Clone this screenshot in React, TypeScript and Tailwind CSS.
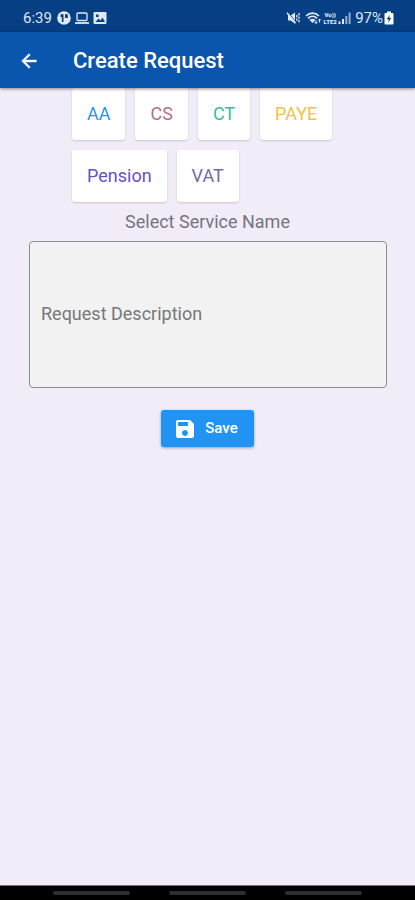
import { useState } from "react";

type Service = { name: string; color: string };

const SERVICES: Service[] = [
  { name: "AA", color: "text-[#2b95e6]" },
  { name: "CS", color: "text-[#b4708f]" },
  { name: "CT", color: "text-[#2fbf9b]" },
  { name: "PAYE", color: "text-[#f2c341]" },
  { name: "Pension", color: "text-[#6a4fc4]" },
  { name: "VAT", color: "text-[#7a68a6]" },
];

export default function App() {
  const [selected, setSelected] = useState<string | null>(null);
  const [description, setDescription] = useState("");

  return (
    <div className="flex min-h-screen flex-col bg-[#f2ecf8] font-[Roboto,sans-serif]">
      <StatusBar />
      <header className="z-10 flex h-14 items-center bg-[#0a55ad] px-[18px] pt-0.5 text-white shadow-[0_1px_3px_rgba(0,0,0,0.45)]">
        <button type="button" aria-label="Back" className="flex w-[55px]">
          <svg viewBox="0 0 24 24" className="size-[22px]" fill="currentColor" stroke="currentColor" strokeWidth="0.6">
            <path d="M20 11H7.83l5.59-5.59L12 4l-8 8 8 8 1.41-1.41L7.83 13H20v-2z" />
          </svg>
        </button>
        <h1 className="text-[22px] leading-7 font-medium">Create Request</h1>
      </header>

      <main className="flex flex-1 flex-col">
        <div className="flex flex-wrap gap-[10px] pr-6 pl-[72px]">
          {SERVICES.map((s) => (
            <button
              key={s.name}
              type="button"
              aria-pressed={selected === s.name}
              onClick={() => setSelected(s.name)}
              className={`h-[52px] rounded-[3px] bg-white px-[15px] text-lg shadow-[0_1px_2px_rgba(0,0,0,0.16)] ${s.color}`}
            >
              {s.name}
            </button>
          ))}
        </div>
        <label htmlFor="description" className="mt-2 text-center text-lg leading-6 text-[#77747c]">
          Select Service Name
        </label>
        <div className="mt-[7px] flex pr-7 pl-[29px]">
          <textarea
            id="description"
            value={description}
            onChange={(e) => setDescription(e.target.value)}
            placeholder="Request Description"
            className="h-[147px] w-full resize-none rounded-[4px] border border-[#8e8c92] bg-[#f2f2f2] px-[11px] pt-[60px] text-lg leading-6 text-[#444444] placeholder:text-[#77767a] focus:outline-none"
          />
        </div>
        <button
          type="button"
          className="mt-[22px] flex h-[37px] items-center gap-2 self-center rounded-[3px] bg-[#2194f3] pr-4 pl-3 text-[15px] font-medium text-white shadow-[0_1px_3px_rgba(0,0,0,0.35)]"
        >
          <svg viewBox="0 0 24 24" className="size-6" fill="currentColor">
            <path d="M17 3H5c-1.11 0-2 .9-2 2v14c0 1.1.89 2 2 2h14c1.1 0 2-.9 2-2V7l-4-4zm-5 16c-1.66 0-3-1.34-3-3s1.34-3 3-3 3 1.34 3 3-1.34 3-3 3zm3-10H5V5h10v4z" />
          </svg>
          Save
        </button>
      </main>

      <nav className="flex h-[15px] items-center justify-center gap-[39px] border-t border-[#777777] bg-black">
        <button type="button" aria-label="Recent apps" className="h-1 w-[77px] rounded-full bg-[#2e2e2e]" />
        <button type="button" aria-label="Home" className="h-1 w-[77px] rounded-full bg-[#2e2e2e]" />
        <button type="button" aria-label="Back" className="h-1 w-[77px] rounded-full bg-[#2e2e2e]" />
      </nav>
    </div>
  );
}

function StatusBar() {
  return (
    <div className="flex h-8 items-center justify-between bg-[#063f83] pt-[3px] pr-[21px] pl-[23px] text-[#dfe9f5]">
      <div className="flex items-center gap-1">
        <span className="mr-px text-[15px] leading-5">6:39</span>
        {/* round app badge */}
        <svg viewBox="0 0 14 14" className="size-[14px]">
          <circle cx="7" cy="7" r="6.8" fill="currentColor" />
          <path d="M3.5 3.2h3V11H4.8V6H3.5zM8 3.2h2.8V7H8z" fill="#063f83" />
        </svg>
        {/* laptop */}
        <svg viewBox="0 0 14 14" className="size-[14px]" fill="none" stroke="currentColor">
          <rect x="2" y="2" width="10" height="7.5" rx="1" strokeWidth="1.3" />
          <path d="M0 12h14" strokeWidth="1.8" />
        </svg>
        {/* picture */}
        <svg viewBox="0 0 14 14" className="size-[14px]">
          <rect x="0.5" y="1" width="13" height="12" rx="1.2" fill="currentColor" />
          <path d="M2.5 11l3-3.5 2 2 2-3 2.5 4.5zM3 3.5h2.5V6H3z" fill="#063f83" />
        </svg>
      </div>
      <div className="flex items-center gap-px">
        {/* muted, vibrate */}
        <svg viewBox="0 0 14 14" className="mr-1 size-[14px]" fill="none" stroke="currentColor">
          <path d="M2 4.5h2.5L9 1.5v11L4.5 9.5H2z" fill="currentColor" stroke="none" />
          <path d="M1.8 1l8.5 10.5" stroke="#063f83" strokeWidth="1" />
          <path d="M1 1.8l8.5 10.5" strokeWidth="1.5" />
          <path d="M10.8 4v6M13 2v10" strokeWidth="1.3" strokeDasharray="2.4 1" />
        </svg>
        {/* wifi */}
        <svg viewBox="0 0 17 14" className="h-[14px] w-[17px]" fill="none" stroke="currentColor">
          <path d="M1 5c3.8-3.8 9.2-3.8 13 0M3 7.3c2.7-2.6 6.3-2.6 9 0" strokeWidth="1.6" />
          <path d="M4.5 9c1.8-1.7 4.2-1.7 6 0l-3 3z" fill="currentColor" stroke="none" />
          <path d="M11 12.5v-3M14.500 8v3.5M9.500 11l1.5 1.500 1.500-1.500M13 9.500L14.500 8 16 9.500" strokeWidth="1" />
        </svg>
        <span className="flex w-[14px] flex-col items-center text-[6px] leading-[7px] font-black">
          <span>Vo))</span>
          <span>LTE2</span>
        </span>
        {/* signal */}
        <svg viewBox="0 0 13 14" className="mr-[3px] h-[14px] w-[13px]" fill="currentColor">
          <path d="M0.500 10.500h2V13h-2zM4 8h2v5H4z" />
          <path d="M7.300 5h2v8h-2zM10.600 1.500h2V13h-2z" opacity="0.65" />
        </svg>
        <span className="text-[15px] leading-5">97%</span>
        {/* charging battery */}
        <svg viewBox="0 0 10 14" className="h-[14px] w-[10px]">
          <path d="M3 0.500h4v1.500H8.500q1 0 1 1V12.500q0 1-1 1h-7q-1 0-1-1V3q0-1 1-1H3z" fill="white" />
          <path d="M5.600 4L2.700 8.300h1.900L4.300 11.500 7.300 7H5.300z" fill="#063f83" />
        </svg>
      </div>
    </div>
  );
}
